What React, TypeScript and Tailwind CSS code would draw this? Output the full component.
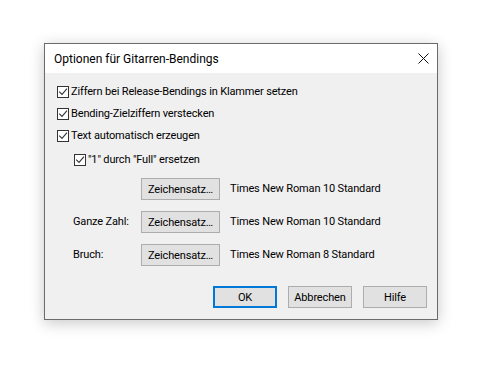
import React from "react";

function Check({ label }: { label: string }) {
  return (
    <div className="flex items-center h-[22px]">
      <span className="w-[12px] h-[12px] border border-[#333] bg-white flex items-center justify-center shrink-0">
        <svg width="10" height="10" viewBox="0 0 10 10">
          <path d="M1.2 4.6 L4 7.4 L9 1.6" fill="none" stroke="#333" strokeWidth="1.1" />
        </svg>
      </span>
      <span className="ml-[2px]">{label}</span>
    </div>
  );
}

function Btn({ children, primary }: { children: React.ReactNode; primary?: boolean }) {
  return (
    <button
      className={
        primary
          ? "w-[64px] h-[22px] border-2 border-[#0078d7] bg-[#e1e1e1] text-black leading-none"
          : "w-[64px] h-[22px] border border-[#adadad] bg-[#e1e1e1] text-black leading-none"
      }
    >
      {children}
    </button>
  );
}

function FontRow({ label, value }: { label: string; value: string }) {
  return (
    <div className="flex items-center h-[22px]">
      <span className="w-[96px] pl-[28px]">{label}</span>
      <button className="w-[79px] h-[22px] border border-[#adadad] bg-[#e1e1e1] text-black leading-none">
        Zeichensatz…
      </button>
      <span className="ml-[10px]">{value}</span>
    </div>
  );
}

export default function App() {
  return (
    <div className="w-[487px] h-[378px] bg-white pt-[43px] pl-[44px] font-['Roboto',sans-serif] text-[11px] tracking-[-0.15px] text-black">
      {/* Dialog */}
      <div className="w-[394px] h-[277px] border border-[#6b6b6b] bg-[#f0f0f0] shadow-[0_3px_14px_rgba(0,0,0,0.22)] flex flex-col">
        {/* Title bar */}
        <div className="h-[29px] bg-white flex items-center justify-between pl-[9px] pr-[8px]">
          <span className="text-[12px] tracking-normal">Optionen für Gitarren-Bendings</span>
          <svg width="11" height="11" viewBox="0 0 11 11">
            <path d="M0.5 0.5 L10.5 10.5 M10.5 0.5 L0.5 10.5" stroke="#111" strokeWidth="1" />
          </svg>
        </div>

        {/* Body */}
        <div className="pl-[12px] pt-[8px]">
          <Check label="Ziffern bei Release-Bendings in Klammer setzen" />
          <Check label="Bending-Zielziffern verstecken" />
          <Check label="Text automatisch erzeugen" />
          <div className="pl-[17px] mt-[2px]">
            <Check label={'"1" durch "Full" ersetzen'} />
          </div>
        </div>

        <div className="flex flex-col gap-[11px] mt-[7px]">
          <FontRow label="" value="Times New Roman 10 Standard" />
          <FontRow label="Ganze Zahl:" value="Times New Roman 10 Standard" />
          <FontRow label="Bruch:" value="Times New Roman 8 Standard" />
        </div>

        {/* Footer */}
        <div className="flex justify-end gap-[11px] pr-[10px] mt-[20px]">
          <Btn primary>OK</Btn>
          <Btn>Abbrechen</Btn>
          <Btn>Hilfe</Btn>
        </div>
      </div>
    </div>
  );
}
